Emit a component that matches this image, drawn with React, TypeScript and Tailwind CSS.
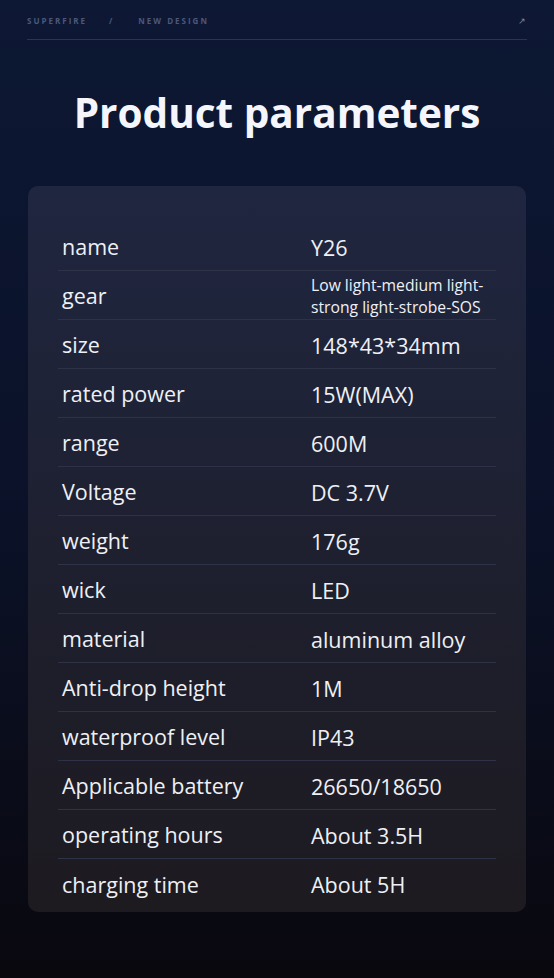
const rows: [string, string][] = [
  ["name", "Y26"],
  ["gear", "Low light-medium light-\nstrong light-strobe-SOS"],
  ["size", "148*43*34mm"],
  ["rated power", "15W(MAX)"],
  ["range", "600M"],
  ["Voltage", "DC 3.7V"],
  ["weight", "176g"],
  ["wick", "LED"],
  ["material", "aluminum alloy"],
  ["Anti-drop height", "1M"],
  ["waterproof level", "IP43"],
  ["Applicable battery", "26650/18650"],
  ["operating hours", "About 3.5H"],
  ["charging time", "About 5H"],
];

function App() {
  return (
    <div
      className="w-[554px] h-[978px] bg-gradient-to-b from-[#0d1834] via-[#0b1229] to-[#09080f] text-white overflow-hidden"
      style={{ fontFamily: '"Open Sans", "Noto Sans", sans-serif' }}
    >
      {/* top bar */}
      <div className="mx-[27px] pt-[16px] h-[40px] border-b border-[#2a3556] flex items-start justify-between">
        <div className="flex items-center text-[8px] font-bold tracking-[0.25em] text-[#4b587a] leading-[10px]">
          <span>SUPERFIRE</span>
          <span className="ml-[22px]">/</span>
          <span className="ml-[24px]">NEW DESIGN</span>
        </div>
        <span className="text-[9px] text-[#7b86a3] leading-[10px] mr-[1px]">↗</span>
      </div>

      <h1 className="text-center font-bold text-[40.5px] leading-none mt-[53px] text-[#f4f6fb]">
        Product parameters
      </h1>

      {/* card */}
      <div className="mx-[28px] mt-[52px] h-[726px] rounded-[10px] bg-gradient-to-b from-[#1f2640] to-[#1d1a20] pt-[36px] px-[30px]">
        {rows.map(([k, v], i) => (
          <div
            key={k}
            className={`flex items-center h-[49px] ${i < rows.length - 1 ? "border-b border-[#2d3246]" : ""}`}
          >
            <div className="w-[253px] pl-[4px] pt-[4px] text-[21.5px] text-[#eef0f5]">{k}</div>
            {v.includes("\n") ? (
              <div className="text-[15.7px] leading-[22px] text-[#eef0f5] whitespace-pre-line pt-[3px]">{v}</div>
            ) : (
              <div className="text-[21.5px] pt-[5px] text-[#eef0f5]">{v}</div>
            )}
          </div>
        ))}
      </div>
    </div>
  );
}

export default App;
